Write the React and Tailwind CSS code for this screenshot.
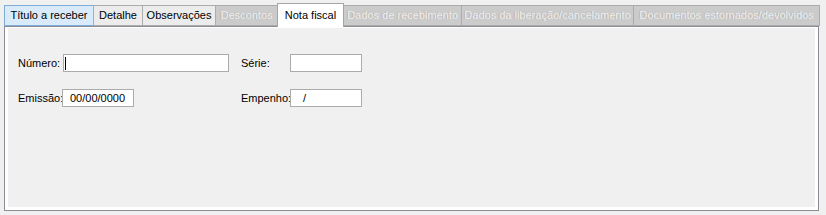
import React from "react";

const tabs = [
  { label: "Título a receber", w: "w-[90px]", kind: "hot" },
  { label: "Detalhe", w: "w-[50px]", kind: "normal" },
  { label: "Observações", w: "w-[74px]", kind: "normal" },
  { label: "Descontos", w: "w-[63px]", kind: "disabled" },
  { label: "Nota fiscal", w: "w-[67px]", kind: "active" },
  { label: "Dados de recebimento", w: "w-[119px]", kind: "disabled" },
  { label: "Dados da liberação/cancelamento", w: "w-[173px]", kind: "disabled" },
  { label: "Documentos estornados/devolvidos", w: "w-[187px]", kind: "disabled" },
];

const tabStyles = {
  hot: "h-[21px] bg-[#d9ebfa] border-[#7eaed8] text-black",
  normal: "h-[21px] bg-[#ececec] border-[#acacac] text-black",
  disabled:
    "h-[21px] bg-[#cbcbcb] border-[#acacac] text-[#eeeeee] [text-shadow:-1px_0_0_#b4b4b4]",
  active: "h-[24px] -mb-px bg-white border-[#a5a5a5] border-b-0 text-black relative z-10",
};

const Field = ({ w, children }) => (
  <div
    className={`${w} h-[18px] bg-white border border-[#ababab] flex items-center text-black`}
  >
    {children}
  </div>
);

export default function App() {
  return (
    <div
      className="w-[826px] h-[215px] bg-[#f0f0f0] text-[11px] overflow-hidden"
      style={{ fontFamily: '"Liberation Sans", Arial, sans-serif' }}
    >
      {/* Tabs */}
      <div className="h-[26px] pl-[4px] flex items-end">
        {tabs.map((t, i) => (
          <div
            key={t.label}
            className={`${t.w} ${tabStyles[t.kind]} ${i > 0 ? "-ml-px" : ""} border flex items-center justify-center whitespace-nowrap leading-none`}
          >
            {t.label}
          </div>
        ))}
      </div>

      {/* Page */}
      <div className="ml-[4px] w-[815px] h-[185px] border border-[#8b8c94]">
        <div className="h-full border-l-[3px] border-r-[3px] border-b-[3px] border-t border-white bg-[#f0f0f0] pt-[26px] pl-[10px]">
          <div className="flex items-center">
            <div className="w-[45px]">Número:</div>
            <Field w="w-[166px]">
              <div className="ml-[1px] w-px h-[13px] bg-black" />
            </Field>
            <div className="ml-[12px] w-[49px]">Série:</div>
            <Field w="w-[72px]" />
          </div>
          <div className="flex items-center mt-[17px]">
            <div className="w-[44px]">Emissão:</div>
            <Field w="w-[72px]">
              <span className="pl-[7px]">00/00/0000</span>
            </Field>
            <div className="ml-[107px] w-[49px]">Empenho:</div>
            <Field w="w-[72px]">
              <span className="pl-[12px]">/</span>
            </Field>
          </div>
        </div>
      </div>
    </div>
  );
}
